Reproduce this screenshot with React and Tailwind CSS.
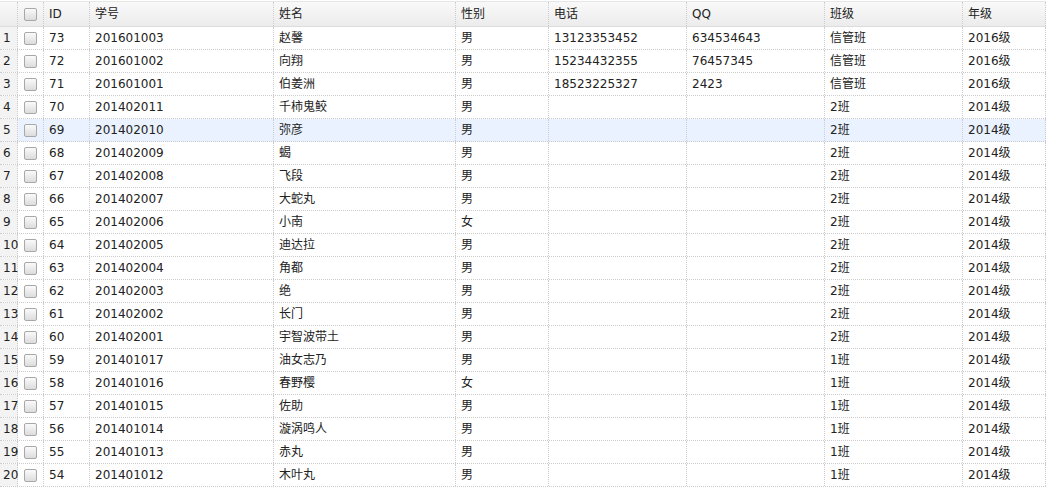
const rows = [
["73","201601003","赵馨","男","13123353452","634534643","信管班","2016级"],
["72","201601002","向翔","男","15234432355","76457345","信管班","2016级"],
["71","201601001","伯姜洲","男","18523225327","2423","信管班","2016级"],
["70","201402011","千柿鬼鲛","男","","","2班","2014级"],
["69","201402010","弥彦","男","","","2班","2014级"],
["68","201402009","蝎","男","","","2班","2014级"],
["67","201402008","飞段","男","","","2班","2014级"],
["66","201402007","大蛇丸","男","","","2班","2014级"],
["65","201402006","小南","女","","","2班","2014级"],
["64","201402005","迪达拉","男","","","2班","2014级"],
["63","201402004","角都","男","","","2班","2014级"],
["62","201402003","绝","男","","","2班","2014级"],
["61","201402002","长门","男","","","2班","2014级"],
["60","201402001","宇智波带土","男","","","2班","2014级"],
["59","201401017","油女志乃","男","","","1班","2014级"],
["58","201401016","春野樱","女","","","1班","2014级"],
["57","201401015","佐助","男","","","1班","2014级"],
["56","201401014","漩涡鸣人","男","","","1班","2014级"],
["55","201401013","赤丸","男","","","1班","2014级"],
["54","201401012","木叶丸","男","","","1班","2014级"],
];
const widths = [46,184,182,93,138,138,138,83];
const heads = ["ID","学号","姓名","性别","电话","QQ","班级","年级"];
const Box = () => <span className="inline-block w-[13px] h-[13px] rounded-[2px] border border-[#a8a8a8] bg-gradient-to-b from-[#fafafa] to-[#dcdcdc]" />;
export default function App() {
  return (
    <div className="w-[1046px] h-[501px] bg-white text-[12px] text-[#222] overflow-hidden" style={{fontFamily:'"DejaVu Sans", Verdana, "Noto Sans CJK SC", sans-serif'}}>
      <div className="flex h-[26px] mt-[1px] bg-gradient-to-b from-[#f9f9f9] to-[#ececec] border-b border-[#ddd] border-t border-t-[#e6e6e6]">
        <div className="w-[18px] border-r border-dotted border-[#ccc]" />
        <div className="w-[26px] flex items-center justify-center border-r border-dotted border-[#ccc]"><Box /></div>
        {heads.map((h,i)=>(<div key={i} style={{width:widths[i]}} className="flex items-center px-[5px] border-r border-dotted border-[#ccc] shrink-0">{h}</div>))}
      </div>
      {rows.map((r,ri)=>(
        <div key={ri} className={`flex h-[23px] box-border border-b border-dotted border-[#ccc] ${ri===4?"bg-[#eaf2ff]":""}`}>
          <div className="w-[18px] flex items-center pl-[3px] bg-[#f3f3f3] border-r border-dotted border-[#ccc] text-[12px]">{ri+1}</div>
          <div className="w-[26px] flex items-center justify-center border-r border-dotted border-[#ccc]"><Box /></div>
          {r.map((c,i)=>(<div key={i} style={{width:widths[i]}} className="flex items-center px-[5px] border-r border-dotted border-[#ccc] shrink-0 whitespace-nowrap">{c}</div>))}
        </div>
      ))}
    </div>
  );
}
